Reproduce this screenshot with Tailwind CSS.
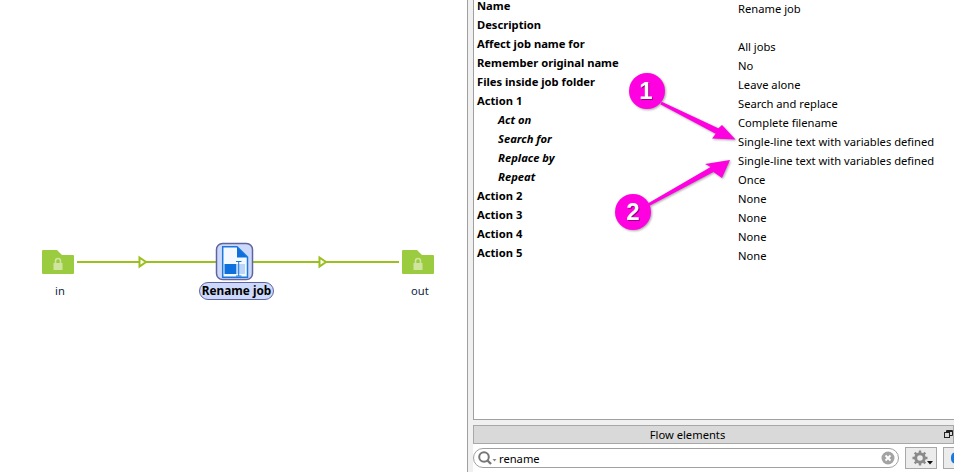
<!DOCTYPE html>
<html lang="en">
<head>
  <meta charset="UTF-8">
  <title>Rename job</title>
  <script src="https://cdn.jsdelivr.net/npm/@tailwindcss/browser@4"></script>
</head>
<body class="bg-white overflow-hidden">
  <div class="relative flex w-[954px] h-[472px] overflow-hidden font-['Noto_Sans',sans-serif] text-[11.2px] text-black">

    <!-- flow canvas -->
    <div class="relative shrink-0 w-[467px] h-full bg-white">
      <svg class="absolute left-0 top-0" width="467" height="472" viewBox="0 0 467 472" fill="none">
        <path d="M77 262H399" stroke="#9bbf1c" stroke-width="2"/>
        <path d="M139.5 257.5L146 262L139.5 266.5Z" fill="#fff" stroke="#9bbf1c" stroke-width="2"/>
        <path d="M319.5 257.5L326 262L319.5 266.5Z" fill="#fff" stroke="#9bbf1c" stroke-width="2"/>
        <path d="M42 251Q42 250 43 250H57L62 255H73Q74 255 74 256V273Q74 274 73 274H43Q42 274 42 273Z" fill="#9bcb3f"/>
        <path d="M402 251Q402 250 403 250H417L422 255H433Q434 255 434 256V273Q434 274 433 274H403Q402 274 402 273Z" fill="#9bcb3f"/>
        <g fill="#cfe59f">
          <rect x="53.500" y="263" width="9" height="7"/>
          <rect x="413.500" y="263" width="9" height="7"/>
        </g>
        <g stroke="#cfe59f" stroke-width="1.6">
          <path d="M55.500 263V261A2.500 2.500 0 0 1 60.500 261V263"/>
          <path d="M415.500 263V261A2.500 2.500 0 0 1 420.500 261V263"/>
        </g>
        <rect x="216.500" y="243.500" width="36" height="36" rx="6" fill="#cdd9fa" stroke="#5f639e" stroke-width="1.500"/>
        <path d="M222.700 246.700H237L247.500 257V277.300H222.700Z" fill="#f4f8ff" stroke="#1b78dc" stroke-width="1.500"/>
        <path d="M237 246.700L247.500 257.500H237Z" fill="#0f6fdc"/>
        <rect x="224.500" y="264" width="12" height="10" fill="#0f6fdc"/>
        <rect x="236.500" y="264" width="8.500" height="10" fill="#bcd6fa"/>
        <path d="M236 261.500H241.500M238.700 261.500V276M236 276H241.500" stroke="#1b78dc" stroke-width="1"/>
      </svg>
      <span class="absolute left-[55px] top-[284px] leading-[14px] text-[#0f1f44]">in</span>
      <span class="absolute left-[411px] top-[284px] leading-[14px] text-[#0f1f44]">out</span>
      <span class="absolute left-[199px] top-[282px] w-[75px] h-[18px] flex items-center justify-center rounded-full border border-[#5f639e] bg-[#cdd9fa] text-[11.8px] font-bold whitespace-nowrap">Rename job</span>
    </div>

    <!-- properties side -->
    <div class="flex-1 min-w-0 flex flex-col border-l border-[#a0a0a0] bg-[#f0f0f0] pl-[5px]">
      <div class="flex h-[420px] border-l border-b border-[#a0a0a0] bg-white pl-[3px]">
        <div class="w-[261px] -mt-[3px] font-bold">
          <div class="h-[19px] flex items-center">Name</div>
          <div class="h-[19px] flex items-center">Description</div>
          <div class="h-[19px] flex items-center">Affect job name for</div>
          <div class="h-[19px] flex items-center">Remember original name</div>
          <div class="h-[19px] flex items-center">Files inside job folder</div>
          <div class="h-[19px] flex items-center">Action 1</div>
          <div class="h-[19px] flex items-center pl-[21px] italic">Act on</div>
          <div class="h-[19px] flex items-center pl-[21px] italic">Search for</div>
          <div class="h-[19px] flex items-center pl-[21px] italic">Replace by</div>
          <div class="h-[19px] flex items-center pl-[21px] italic">Repeat</div>
          <div class="h-[19px] flex items-center">Action 2</div>
          <div class="h-[19px] flex items-center">Action 3</div>
          <div class="h-[19px] flex items-center">Action 4</div>
          <div class="h-[19px] flex items-center">Action 5</div>
        </div>
        <div class="flex-1 whitespace-nowrap">
          <div class="h-[19px] flex items-center">Rename job</div>
          <div class="h-[19px]"></div>
          <div class="h-[19px] flex items-center">All jobs</div>
          <div class="h-[19px] flex items-center">No</div>
          <div class="h-[19px] flex items-center">Leave alone</div>
          <div class="h-[19px] flex items-center">Search and replace</div>
          <div class="h-[19px] flex items-center">Complete filename</div>
          <div class="h-[19px] flex items-center">Single-line text with variables defined</div>
          <div class="h-[19px] flex items-center">Single-line text with variables defined</div>
          <div class="h-[19px] flex items-center">Once</div>
          <div class="h-[19px] flex items-center">None</div>
          <div class="h-[19px] flex items-center">None</div>
          <div class="h-[19px] flex items-center">None</div>
          <div class="h-[19px] flex items-center">None</div>
        </div>
      </div>

      <div class="mt-[5px] h-[19px] relative flex items-center justify-center border border-[#a8a8a8] bg-[#d9d9d9]">
        <span class="pr-[52px] pt-[2px]">Flow elements</span>
        <svg class="absolute right-0 top-[3px]" width="9" height="10" viewBox="0 0 9 10" fill="none" stroke="#222">
          <rect x="0.500" y="3.500" width="5" height="5"/>
          <path d="M2.500 3.500V1.500H8.500V6.500H5.500M2.500 2.500H8.500"/>
        </svg>
      </div>

      <div class="flex items-center h-[28px] bg-white">
        <div class="shrink-0 w-[426px] h-[20px] flex items-center rounded-full border border-[#a0a0a0] bg-white relative">
          <svg class="ml-[3px] shrink-0" width="22" height="14" viewBox="0 0 22 14" fill="none">
            <circle cx="7" cy="6" r="4.800" stroke="#777" stroke-width="2"/>
            <path d="M10.500 9.500L14 13" stroke="#777" stroke-width="2.400"/>
            <path d="M15.500 8H19.500L17.500 10.500Z" fill="#888"/>
          </svg>
          <span class="pt-[2px]">rename</span>
          <svg class="absolute right-[3px] top-[2px]" width="14" height="14" viewBox="0 0 14 14">
            <circle cx="7" cy="7" r="6.500" fill="#a3a3a3"/>
            <path d="M4.500 4.500L9.500 9.500M9.500 4.500L4.500 9.500" stroke="#fff" stroke-width="1.800"/>
          </svg>
        </div>
        <div class="shrink-0 relative ml-[6px] w-[32px] h-[22px] flex items-center justify-center border border-[#a8a8a8] bg-[#ececec]">
          <svg class="-ml-[3px]" width="16" height="16" viewBox="0 0 16 16" fill="none">
            <circle cx="8" cy="8" r="4.300" stroke="#8a8a8a" stroke-width="3"/>
            <path d="M8 0.500V3M8 13V15.500M0.500 8H3M13 8H15.500M2.700 2.700L4.500 4.500M11.500 11.500L13.300 13.300M13.300 2.700L11.500 4.500M4.500 11.500L2.700 13.300" stroke="#8a8a8a" stroke-width="2.400"/>
          </svg>
          <svg class="absolute right-[3px] bottom-[3px]" width="6" height="4" viewBox="0 0 6 4"><path d="M0 0H6L3 3.500Z" fill="#111"/></svg>
        </div>
        <div class="shrink-0 ml-[6px] w-[20px] h-[22px] border border-[#a8a8a8] bg-[#ececec] pl-[7px] flex items-center overflow-hidden">
          <div class="shrink-0 w-[10px] h-[12px] rounded-full bg-[#1b78dc]"></div>
        </div>
      </div>
    </div>

    <!-- callouts -->
    <svg class="absolute left-0 top-0 pointer-events-none drop-shadow-[1px_1px_1px_rgba(0,0,0,0.35)]" width="954" height="472" viewBox="0 0 954 472" fill="none">
      <path d="M661.700 101.700L718.300 128.300L722 125L735.500 139.500L712 138.500L715.700 133.700L660.300 104.300Z" fill="#ff00e0"/>
      <path d="M647.300 203.700L710.600 166.900L705 164L730 160L722 178L713.400 172.100L648.700 206.300Z" fill="#ff00e0"/>
      <circle cx="647" cy="91" r="18" fill="#ff00e0"/>
      <circle cx="633" cy="212" r="18" fill="#ff00e0"/>
    </svg>
    <span class="absolute left-[628px] top-[73px] w-[36px] h-[36px] flex items-center justify-center text-white font-bold text-[24px] font-['Liberation_Sans',sans-serif] drop-shadow-[1px_1px_0_rgba(0,0,0,0.4)]">1</span>
    <span class="absolute left-[615px] top-[194px] w-[36px] h-[36px] flex items-center justify-center text-white font-bold text-[24px] font-['Liberation_Sans',sans-serif] drop-shadow-[1px_1px_0_rgba(0,0,0,0.4)]">2</span>
  </div>
</body>
</html>
